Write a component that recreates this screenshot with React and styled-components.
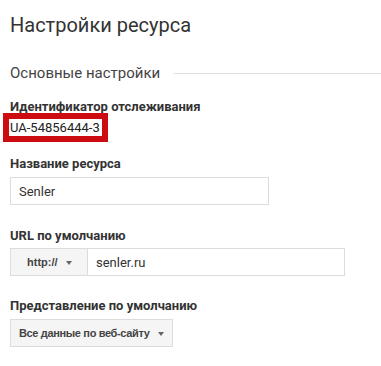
import styled, { createGlobalStyle } from "styled-components";

const Global = createGlobalStyle`
  html, body {
    margin: 0;
    background: #fff;
  }
  body {
    font-family: Roboto, "Liberation Sans", sans-serif;
    color: #333;
  }
`;

const Page = styled.div`
  padding: 13px 0 0 10px;
  width: 381px;
  box-sizing: border-box;
`;

const Title = styled.h1`
  margin: 0;
  font-size: 20px;
  font-weight: 400;
  line-height: 24px;
  color: #333;
`;

const Section = styled.div`
  display: flex;
  align-items: center;
  gap: 14px;
  margin-top: 26px;
  font-size: 15px;
  line-height: 20px;
  color: #444;

  &::after {
    content: "";
    flex: 1;
    height: 1px;
    background: #e0e0e0;
  }
`;

const Field = styled.div`
  margin-top: ${(p) => p.gap || 22}px;
`;

const Label = styled.div`
  font-size: 13px;
  font-weight: 700;
  line-height: 16px;
  color: #333;
  margin-bottom: ${(p) => p.below || 5}px;
`;

const Highlight = styled.div`
  width: fit-content;
  margin-left: -1px;
  padding: 0 2px 0 1px;
  font-size: 13px;
  line-height: 17px;
  color: #222;
  outline: 6px solid #cc0c10;
`;

const Input = styled.div`
  box-sizing: border-box;
  width: ${(p) => p.width}px;
  height: 28px;
  padding: 0 8px;
  display: flex;
  align-items: center;
  border: 1px solid #dcdcdc;
  font-size: 13px;
  color: #333;
`;

const Group = styled.div`
  display: flex;
  width: 335px;
  height: 28px;
  box-sizing: border-box;
  border: 1px solid #dcdcdc;
`;

const Select = styled.div`
  display: flex;
  align-items: center;
  gap: 8px;
  box-sizing: border-box;
  height: ${(p) => (p.bordered ? 28 : 26)}px;
  width: ${(p) => (p.width ? p.width + "px" : "fit-content")};
  padding: 0 8px 0 ${(p) => p.padLeft || 8}px;
  background: #f5f5f5;
  border: ${(p) => (p.bordered ? "1px solid #dcdcdc" : "none")};
  border-right: 1px solid #dcdcdc;
  font-family: "Liberation Sans", Arial, sans-serif;
  font-size: 11px;
  font-weight: 700;
  letter-spacing: ${(p) => (p.tight ? "-0.35px" : "0")};
  color: #444;
`;

const Caret = styled.span`
  width: 0;
  height: 0;
  border-left: 3.5px solid transparent;
  border-right: 3.5px solid transparent;
  border-top: 4px solid #666;
  margin-top: 1px;
`;

const UrlText = styled.div`
  display: flex;
  align-items: center;
  padding-left: 8px;
  font-size: 13px;
  color: #333;
`;

export default function App() {
  return (
    <Page>
      <Global />
      <Title>Настройки ресурса</Title>
      <Section>Основные настройки</Section>

      <Field gap={16}>
        <Label below={4}>Идентификатор отслеживания</Label>
        <Highlight>UA-54856444-3</Highlight>
      </Field>

      <Field gap={20}>
        <Label>Название ресурса</Label>
        <Input width={259}>Senler</Input>
      </Field>

      <Field gap={23}>
        <Label below={4}>URL по умолчанию</Label>
        <Group>
          <Select width={77} padLeft={16}>
            http://
            <Caret />
          </Select>
          <UrlText>senler.ru</UrlText>
        </Group>
      </Field>

      <Field gap={22}>
        <Label>Представление по умолчанию</Label>
        <Select bordered tight>
          Все данные по веб-сайту
          <Caret />
        </Select>
      </Field>
    </Page>
  );
}
